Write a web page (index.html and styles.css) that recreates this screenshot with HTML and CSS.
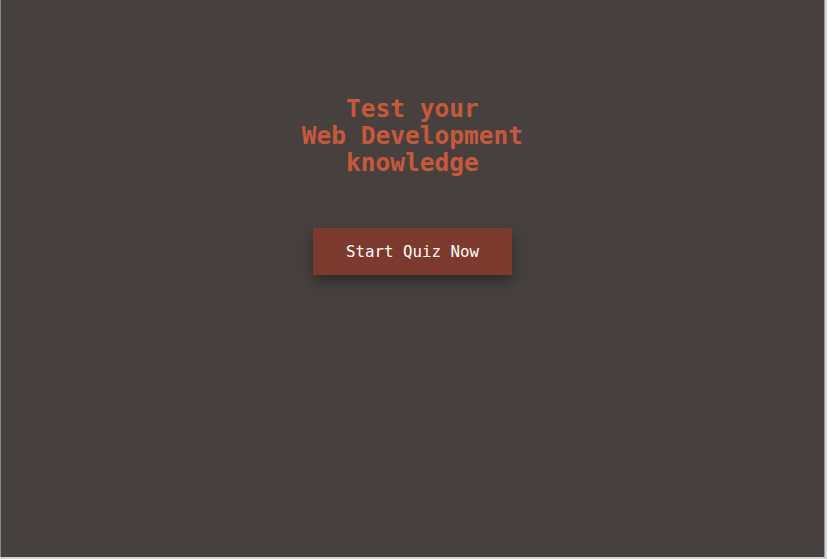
FILE: index.html
```html
<!DOCTYPE html>
<html lang="en">
<head>
<meta charset="utf-8">
<title>Quiz</title>
<link rel="stylesheet" href="styles.css">
</head>
<body>
<div class="frame">
  <main class="intro">
    <h1 class="title">Test your<br>Web Development<br>knowledge</h1>
    <button class="start">Start Quiz Now</button>
  </main>
</div>
</body>
</html>
```
FILE: styles.css
```css
html, body {
  margin: 0;
  padding: 0;
  background: #d3d4d4;
  height: 100%;
}
.frame {
  width: 823px;
  height: 557px;
  background: #46413f;
  border-left: 1px solid #8a8a8a;
  border-right: 1px solid #9a9a9a;
  box-sizing: content-box;
}
.intro {
  display: flex;
  flex-direction: column;
  align-items: center;
  padding-top: 95px;
}
.title {
  margin: 0;
  font-family: "DejaVu Sans Mono", "Liberation Mono", monospace;
  font-weight: bold;
  font-size: 24.5px;
  line-height: 27px;
  color: #c9583a;
  text-align: center;
}
.start {
  margin-top: 52px;
  width: 199px;
  height: 47px;
  border: none;
  background: #7b3a2d;
  color: #ffffff;
  font-family: "DejaVu Sans Mono", "Liberation Mono", monospace;
  font-size: 15.8px;
  box-shadow: 0 6px 12px rgba(0, 0, 0, 0.35);
  cursor: pointer;
}
```
